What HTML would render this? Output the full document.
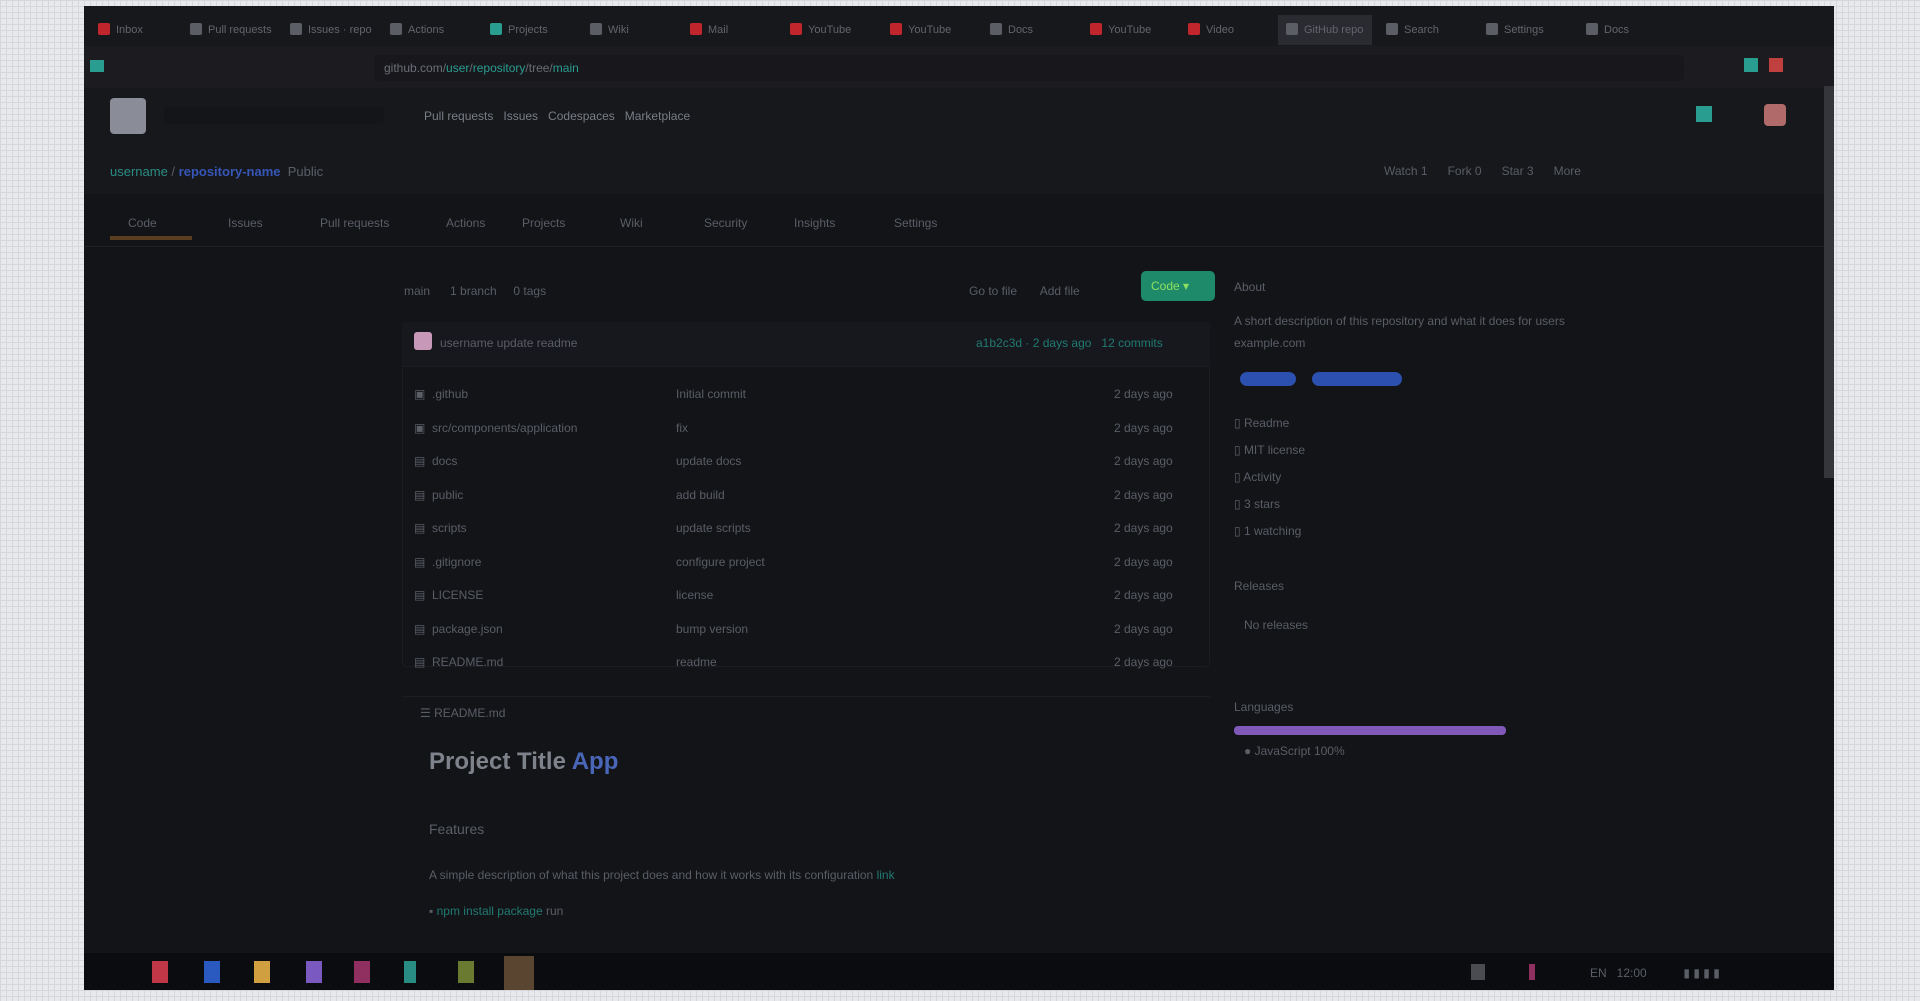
<!DOCTYPE html>
<html><head><meta charset="utf-8"><style>
*{margin:0;padding:0;box-sizing:border-box}
body{width:1920px;height:1001px;overflow:hidden;font-family:"Liberation Sans",sans-serif;font-size:12px;color:#5f636b;
background-color:#e8e9ec;background-image:linear-gradient(#d6d7db 1px,transparent 1px),linear-gradient(90deg,#d6d7db 1px,transparent 1px);background-size:6px 6px}
.a{position:absolute}
#win{left:84px;top:6px;width:1750px;height:984px;background:#131418;overflow:hidden}
.tab{top:9px;height:30px;width:96px;color:#62656c;font-size:11px;padding:9px 0 0 26px;white-space:nowrap;overflow:hidden}
.tab i{position:absolute;left:8px;top:8px;width:12px;height:12px;background:#5b5e65;border-radius:2px}
.t{color:#5a5e66;white-space:nowrap}
</style></head><body>
<div id="win" class="a">
 <div class="a" style="left:0;top:0;width:1750px;height:50px;background:#17181c"></div>
 <div class="a tab" style="left:6px"><i style="background:#c0262b"></i>Inbox</div>
 <div class="a tab" style="left:98px"><i></i>Pull requests</div>
 <div class="a tab" style="left:198px"><i></i>Issues · repo</div>
 <div class="a tab" style="left:298px"><i></i>Actions</div>
 <div class="a tab" style="left:398px"><i style="background:#2a9d91"></i>Projects</div>
 <div class="a tab" style="left:498px"><i></i>Wiki</div>
 <div class="a tab" style="left:598px"><i style="background:#c0262b"></i>Mail</div>
 <div class="a tab" style="left:698px"><i style="background:#c0262b"></i>YouTube</div>
 <div class="a tab" style="left:798px"><i style="background:#c0262b"></i>YouTube</div>
 <div class="a tab" style="left:898px"><i></i>Docs</div>
 <div class="a tab" style="left:998px"><i style="background:#c0262b"></i>YouTube</div>
 <div class="a tab" style="left:1096px"><i style="background:#c0262b"></i>Video</div>
 <div class="a tab" style="left:1194px;background:#2a2b30;width:94px"><i></i>GitHub repo</div>
 <div class="a tab" style="left:1294px"><i></i>Search</div>
 <div class="a tab" style="left:1394px"><i></i>Settings</div>
 <div class="a tab" style="left:1494px"><i></i>Docs</div>
 <div class="a" style="left:0;top:40px;width:1750px;height:42px;background:#1c1b20"></div>
 <div class="a" style="left:6px;top:54px;width:14px;height:12px;background:#2a9d91"></div>
 <div class="a" style="left:290px;top:49px;width:1310px;height:26px;background:#18181c;border-radius:4px"></div>
 <div class="a t" style="left:300px;top:55px;font-size:12px;color:#6a6e76">github.com/<span style="color:#2a9d91">user</span>/<span style="color:#2a9d91">repository</span>/tree/<span style="color:#2a9d91">main</span></div>
 <div class="a" style="left:1660px;top:52px;width:14px;height:14px;background:#2a9d91"></div>
 <div class="a" style="left:1685px;top:52px;width:14px;height:14px;background:#c04040"></div>
 <div class="a" style="left:0;top:82px;width:1750px;height:106px;background:#17181c"></div>
 <div class="a" style="left:26px;top:92px;width:36px;height:36px;border-radius:4px;background:#8a8d98"></div>
 <div class="a" style="left:80px;top:100px;width:220px;height:18px;background:#141518;border-radius:4px"></div>
 <div class="a t" style="left:340px;top:103px;color:#7a7e86">Pull requests&nbsp;&nbsp;&nbsp;Issues&nbsp;&nbsp;&nbsp;Codespaces&nbsp;&nbsp;&nbsp;Marketplace</div>
 <div class="a" style="left:1612px;top:100px;width:16px;height:16px;background:#2a9d91"></div>
 <div class="a" style="left:1680px;top:98px;width:22px;height:22px;border-radius:4px;background:#b06a6a"></div>
 <div class="a t" style="left:26px;top:158px;font-size:13px"><span style="color:#2a8d84">username</span> / <b style="color:#3656b8">repository-name</b>&nbsp; Public</div>
 <div class="a t" style="left:1300px;top:158px">Watch 1&nbsp;&nbsp;&nbsp;&nbsp;&nbsp; Fork 0&nbsp;&nbsp;&nbsp;&nbsp;&nbsp; Star 3&nbsp;&nbsp;&nbsp;&nbsp;&nbsp; More</div>
 <div class="a t" style="left:44px;top:210px">Code</div>
 <div class="a t" style="left:144px;top:210px">Issues</div>
 <div class="a t" style="left:236px;top:210px">Pull requests</div>
 <div class="a t" style="left:362px;top:210px">Actions</div>
 <div class="a t" style="left:438px;top:210px">Projects</div>
 <div class="a t" style="left:536px;top:210px">Wiki</div>
 <div class="a t" style="left:620px;top:210px">Security</div>
 <div class="a t" style="left:710px;top:210px">Insights</div>
 <div class="a t" style="left:810px;top:210px">Settings</div>
 <div class="a" style="left:26px;top:230px;width:82px;height:4px;background:#5a3e20"></div>
 <div class="a" style="left:0;top:240px;width:1750px;height:1px;background:#1e2025"></div>
 <div class="a t" style="left:320px;top:278px">main&nbsp;&nbsp;&nbsp;&nbsp;&nbsp; 1 branch&nbsp;&nbsp;&nbsp;&nbsp; 0 tags</div>
 <div class="a t" style="left:885px;top:278px">Go to file&nbsp;&nbsp;&nbsp;&nbsp;&nbsp;&nbsp; Add file</div>
 <div class="a" style="left:1057px;top:265px;width:74px;height:30px;background:#1f8a6a;border-radius:5px;color:#8ee060;font-size:12px;padding:8px 10px">Code ▾</div>
 <div class="a" style="left:318px;top:316px;width:808px;height:345px;border:1px solid #1b1d22;border-radius:5px"></div>
 <div class="a" style="left:318px;top:316px;width:808px;height:44px;background:#17181d"></div>
 <div class="a" style="left:330px;top:326px;width:18px;height:18px;background:#c898b8;border-radius:3px"></div>
 <div class="a t" style="left:356px;top:330px">username update readme</div>
 <div class="a t" style="left:892px;top:330px;color:#217a72">a1b2c3d · 2 days ago&nbsp;&nbsp; 12 commits</div>
 <div class="a" style="left:318px;top:360px;width:808px;height:1px;background:#1b1d22"></div>
 <div class="a t" style="left:330px;top:372px;line-height:33.5px">
 ▣ &nbsp;.github<br>▣ &nbsp;src/components/application<br>▤ &nbsp;docs<br>▤ &nbsp;public<br>▤ &nbsp;scripts<br>▤ &nbsp;.gitignore<br>▤ &nbsp;LICENSE<br>▤ &nbsp;package.json<br>▤ &nbsp;README.md</div>
 <div class="a t" style="left:592px;top:372px;line-height:33.5px">Initial commit<br>fix<br>update docs<br>add build<br>update scripts<br>configure project<br>license<br>bump version<br>readme</div>
 <div class="a t" style="left:1030px;top:372px;line-height:33.5px">2 days ago<br>2 days ago<br>2 days ago<br>2 days ago<br>2 days ago<br>2 days ago<br>2 days ago<br>2 days ago<br>2 days ago</div>
 <div class="a" style="left:318px;top:690px;width:808px;height:1px;background:#1b1d22"></div>
 <div class="a t" style="left:336px;top:700px">☰ README.md</div>
 <div class="a t" style="left:345px;top:742px;font-size:24px;font-weight:bold;color:#7e828a">Project Title <span style="color:#4a66b8">App</span></div>
 <div class="a t" style="left:345px;top:815px;font-size:14px">Features</div>
 <div class="a t" style="left:345px;top:862px">A simple description of what this project does and how it works with its configuration <span style="color:#217a72">link</span></div>
 <div class="a t" style="left:345px;top:898px">▪ <span style="color:#217a72">npm install package</span> run</div>
 <div class="a t" style="left:1150px;top:274px">About</div>
 <div class="a t" style="left:1150px;top:308px">A short description of this repository and what it does for users</div>
 <div class="a t" style="left:1150px;top:330px">example.com</div>
 <div class="a" style="left:1156px;top:366px;width:56px;height:14px;background:#2b50b0;border-radius:7px"></div>
 <div class="a" style="left:1228px;top:366px;width:90px;height:14px;background:#2b50b0;border-radius:7px"></div>
 <div class="a t" style="left:1150px;top:404px;line-height:27px">▯ Readme<br>▯ MIT license<br>▯ Activity<br>▯ 3 stars<br>▯ 1 watching</div>
 <div class="a t" style="left:1150px;top:573px">Releases</div>
 <div class="a t" style="left:1160px;top:612px">No releases</div>
 <div class="a t" style="left:1150px;top:694px">Languages</div>
 <div class="a" style="left:1150px;top:720px;width:272px;height:9px;background:#8058b8;border-radius:4px"></div>
 <div class="a t" style="left:1160px;top:738px">● JavaScript 100%</div>
 <div class="a" style="left:1740px;top:80px;width:10px;height:392px;background:#34363c"></div>
 <div class="a" style="left:0;top:947px;width:1750px;height:37px;background:#0b0c10"></div>
 <div class="a" style="left:68px;top:955px;width:16px;height:22px;background:#c03848"></div>
 <div class="a" style="left:120px;top:955px;width:16px;height:22px;background:#2a5ac0"></div>
 <div class="a" style="left:170px;top:955px;width:16px;height:22px;background:#d0a040"></div>
 <div class="a" style="left:222px;top:955px;width:16px;height:22px;background:#7a5ac0"></div>
 <div class="a" style="left:270px;top:955px;width:16px;height:22px;background:#903060"></div>
 <div class="a" style="left:320px;top:955px;width:12px;height:22px;background:#2a8d84"></div>
 <div class="a" style="left:374px;top:955px;width:16px;height:22px;background:#6a7a30"></div>
 <div class="a" style="left:420px;top:950px;width:30px;height:34px;background:#5a4530"></div>
 <div class="a" style="left:1387px;top:958px;width:14px;height:16px;background:#4a4c52"></div>
 <div class="a" style="left:1445px;top:958px;width:6px;height:16px;background:#903060"></div>
 <div class="a t" style="left:1506px;top:960px">EN&nbsp;&nbsp;&nbsp;12:00&nbsp;&nbsp;&nbsp;&nbsp;&nbsp;&nbsp;&nbsp;&nbsp;&nbsp;&nbsp;&nbsp;▮ ▮ ▮ ▮</div>
</div>
</body></html>
